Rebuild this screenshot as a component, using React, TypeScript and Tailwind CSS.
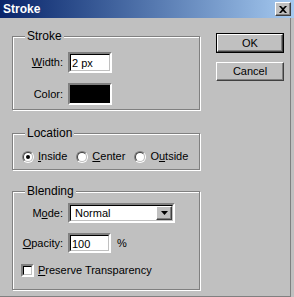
import React from "react";

const sunken =
  "border-2 border-t-[#808080] border-l-[#808080] border-r-white border-b-white";

const Mn = ({ children }: { children: React.ReactNode }) => (
  <span className="underline underline-offset-[1px]">{children}</span>
);

const Group = ({
  title,
  className,
  children,
}: {
  title: string;
  className?: string;
  children: React.ReactNode;
}) => (
  <fieldset
    className={`border border-[#808080] shadow-[inset_1px_1px_0_#fff,1px_1px_0_#fff] ${className}`}
  >
    <legend className="ml-[12px] bg-[#c0c0c0] px-[2px] text-[12px] leading-[13px]">
      {title}
    </legend>
    {children}
  </fieldset>
);

const Field = ({
  label,
  children,
}: {
  label: React.ReactNode;
  children: React.ReactNode;
}) => (
  <div className="flex items-center">
    <span className="mr-[5px] w-[50px] text-right">{label}</span>
    {children}
  </div>
);

const Radio = ({ checked, label }: { checked?: boolean; label: React.ReactNode }) => (
  <div className="flex items-center">
    <span className="flex h-[12px] w-[12px] items-center justify-center rounded-full border border-t-[#808080] border-l-[#808080] border-r-white border-b-white">
      <span className="flex h-[10px] w-[10px] items-center justify-center rounded-full border border-t-[#404040] border-l-[#404040] border-r-[#c0c0c0] border-b-[#c0c0c0] bg-white">
        {checked && <span className="h-[4px] w-[4px] rounded-full bg-black" />}
      </span>
    </span>
    <span className="ml-[4px]">{label}</span>
  </div>
);

const Button = ({ label, main }: { label: string; main?: boolean }) => (
  <div className={main ? "border border-black" : ""}>
    <div
      className={`flex w-[66px] items-center justify-center border border-t-white border-l-white border-r-[#404040] border-b-[#404040] shadow-[inset_-1px_-1px_0_#808080] ${
        main ? "h-[18px]" : "h-[19px] w-[68px]"
      }`}
    >
      {label}
    </div>
  </div>
);

export default function App() {
  return (
    <div
      className="flex h-[297px] w-[294px] flex-col bg-[#c0c0c0] text-[11px] leading-[13px] text-black"
      style={{ fontFamily: '"Liberation Sans", Arial, sans-serif' }}
    >
      {/* title bar */}
      <div className="flex h-[18px] items-center bg-gradient-to-r from-[#0a246a] to-[#a6caf0] pr-[3px] pl-[3px]">
        <span className="flex-1 text-[12px] font-bold text-white">Stroke</span>
        <span className="flex h-[14px] w-[16px] items-center justify-center border border-t-white border-l-white border-r-[#404040] border-b-[#404040] bg-[#c0c0c0] shadow-[inset_-1px_-1px_0_#808080]">
          <svg width="8" height="7" viewBox="0 0 8 7">
            <path d="M0 0h2l2 2 2-2h2L5 3.5 8 7H6L4 5 2 7H0l3-3.5z" fill="#000" />
          </svg>
        </span>
      </div>

      <div className="flex flex-1 border-r border-b border-[#808080] mr-[3px] pt-[12px] pl-[12px]">
        <div className="flex w-[188px] flex-col">
          <Group title="Stroke" className="h-[80px] pt-[9px]">
            <Field
              label={
                <>
                  <Mn>W</Mn>idth:
                </>
              }
            >
              <div className={`h-[21px] w-[44px] bg-white ${sunken}`}>
                <div className="h-full border border-t-black border-l-black border-r-[#c0c0c0] border-b-[#c0c0c0] pl-[1px] leading-[17px]">
                  2 px
                </div>
              </div>
            </Field>
            <div className="mt-[10px]">
              <Field label="Color:">
                <div className={`h-[22px] w-[44px] bg-black ${sunken}`} />
              </Field>
            </div>
          </Group>

          <Group title="Location" className="mt-[17px] h-[43px] pt-[10px]">
            <div className="flex items-center pl-[9px]">
              <Radio
                checked
                label={
                  <>
                    <Mn>I</Mn>nside
                  </>
                }
              />
              <div className="ml-[9px]">
                <Radio
                  label={
                    <>
                      <Mn>C</Mn>enter
                    </>
                  }
                />
              </div>
              <div className="ml-[9px]">
                <Radio
                  label={
                    <>
                      O<Mn>u</Mn>tside
                    </>
                  }
                />
              </div>
            </div>
          </Group>

          <Group title="Blending" className="mt-[15px] h-[105px] pt-[5px]">
            <Field
              label={
                <>
                  M<Mn>o</Mn>de:
                </>
              }
            >
              <div className={`h-[20px] w-[107px] bg-white ${sunken}`}>
                <div className="flex h-full items-center border border-t-black border-l-black border-r-[#c0c0c0] border-b-[#c0c0c0]">
                  <span className="flex-1 pl-[4px]">Normal</span>
                  <span className="flex h-full w-[16px] items-center justify-center border border-t-white border-l-white border-r-[#404040] border-b-[#404040] bg-[#c0c0c0] shadow-[inset_-1px_-1px_0_#808080]">
                    <svg width="7" height="4" viewBox="0 0 7 4">
                      <path d="M0 0h7L3.5 4z" fill="#000" />
                    </svg>
                  </span>
                </div>
              </div>
            </Field>
            <div className="mt-[10px]">
              <Field
                label={
                  <>
                    <Mn>O</Mn>pacity:
                  </>
                }
              >
                <div className={`h-[20px] w-[43px] bg-white ${sunken}`}>
                  <div className="h-full border border-t-black border-l-black border-r-[#c0c0c0] border-b-[#c0c0c0] pl-[1px] leading-[16px]">
                    100
                  </div>
                </div>
                <span className="ml-[6px]">%</span>
              </Field>
            </div>
            <div className="mt-[11px] flex items-center pl-[8px]">
              <span className={`h-[13px] w-[13px] bg-white ${sunken}`}>
                <span className="block h-full w-full border border-t-black border-l-black border-r-[#c0c0c0] border-b-[#c0c0c0]" />
              </span>
              <span className="ml-[4px]">
                <Mn>P</Mn>reserve Transparency
              </span>
            </div>
          </Group>
        </div>

        <div className="ml-[16px] flex flex-col pt-[3px]">
          <Button label="OK" main />
          <div className="mt-[9px]">
            <Button label="Cancel" />
          </div>
        </div>
      </div>
    </div>
  );
}
